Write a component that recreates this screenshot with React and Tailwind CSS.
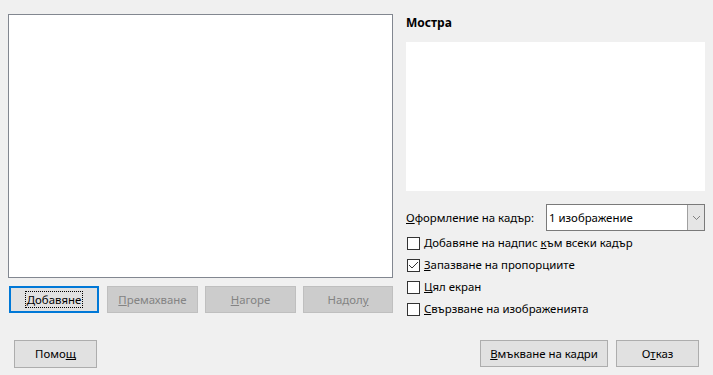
import React from "react";

const font = { fontFamily: '"Segoe UI", "Noto Sans", "Open Sans", sans-serif' };

function U({ children }) {
  return <span className="underline underline-offset-[1px] decoration-1">{children}</span>;
}

function Btn({ children, disabled, focused, className = "" }) {
  if (focused) {
    return (
      <div className={`h-[27px] flex items-center justify-center border-2 border-[#0078d7] bg-[#e1e1e1] text-black ${className}`}>
        <span className="border border-dotted border-black px-[1px] leading-[15px]">{children}</span>
      </div>
    );
  }
  return (
    <div
      className={`h-[27px] flex items-center justify-center border ${
        disabled ? "border-[#bfbfbf] bg-[#cccccc] text-[#838383]" : "border-[#adadad] bg-[#e1e1e1] text-black"
      } ${className}`}
    >
      {children}
    </div>
  );
}

function Check({ checked, children }) {
  return (
    <div className="h-[22px] flex items-center">
      <div className="w-[13px] h-[13px] border border-[#333333] bg-white flex items-center justify-center ml-[1px]">
        {checked && (
          <svg width="11" height="11" viewBox="0 0 11 11">
            <path d="M1 5 L4 8 L10 2" fill="none" stroke="#333" strokeWidth="1" />
          </svg>
        )}
      </div>
      <span className="ml-[4px]">{children}</span>
    </div>
  );
}

export default function App() {
  return (
    <div className="w-[713px] h-[375px] bg-[#f0f0f0] text-[11.4px] text-black overflow-hidden" style={font}>
      <div className="flex pt-[14px]">
        <div className="ml-[8px] w-[385px] flex flex-col">
          <div className="h-[264px] border border-[#828790] bg-white" />
          <div className="mt-[8px] flex">
            <Btn focused className="w-[90px] ml-[1px]"><U>Д</U>обавяне</Btn>
            <Btn disabled className="w-[91px] ml-[8px]"><U>П</U>ремахване</Btn>
            <Btn disabled className="w-[91px] ml-[7px]"><U>Н</U>агоре</Btn>
            <Btn disabled className="w-[90px] ml-[7px]">Надол<U>у</U></Btn>
          </div>
        </div>
        <div className="ml-[13px] w-[299px] flex flex-col">
          <div className="h-[28px] pt-[1px] leading-[16px] font-bold text-[12px]">Мостра</div>
          <div className="h-[149px] bg-white" />
          <div className="mt-[13px] h-[27px] flex items-center">
            <span className="w-[140px]"><U>О</U>формление на кадър:</span>
            <div className="w-[159px] h-[27px] border border-[#7a7a7a] bg-white flex items-center">
              <span className="flex-1 pl-[2px]">1 изображение</span>
              <div className="w-[17px] h-full bg-[#e5e5e5] border-l border-[#a0a0a0] flex items-center justify-center">
                <svg width="9" height="6" viewBox="0 0 9 6">
                  <path d="M1 1 L4.5 4.5 L8 1" fill="none" stroke="#666" strokeWidth="0.8" />
                </svg>
              </div>
            </div>
          </div>
          <div className="mt-[1px] flex flex-col">
            <Check>Добавяне на надпис <U>к</U>ъм всеки кадър</Check>
            <Check checked><U>З</U>апазване на пропорциите</Check>
            <Check><U>Ц</U>ял екран</Check>
            <Check><U>С</U>вързване на изображенията</Check>
          </div>
        </div>
      </div>
      <div className="mt-[20px] flex">
        <Btn className="ml-[14px] w-[83px] h-[28px]">Помо<U>щ</U></Btn>
        <Btn className="ml-auto w-[128px]"><U>В</U>мъкване на кадри</Btn>
        <Btn className="ml-[8px] mr-[14px] w-[83px]">О<U>т</U>каз</Btn>
      </div>
    </div>
  );
}
